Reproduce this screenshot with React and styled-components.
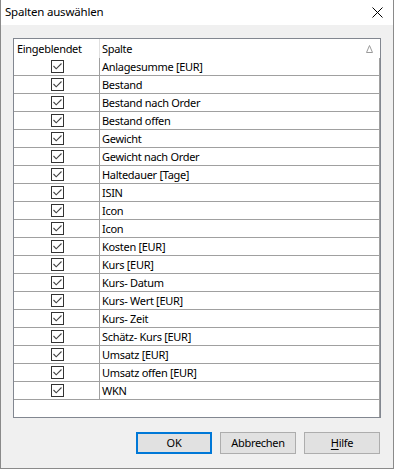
import React from 'react';
import styled, { createGlobalStyle } from 'styled-components';

const GlobalStyle = createGlobalStyle`
  html, body {
    margin: 0;
    padding: 0;
    background: #ffffff;
  }
  body {
    font-family: "Noto Sans", "Open Sans", sans-serif;
    font-size: 11px;
    letter-spacing: -0.3px;
    color: #000;
  }
`

const Window = styled.div`
  width: 394px;
  height: 469px;
  box-sizing: border-box;
  border: 1px solid #8a8a8a;
  border-top: none;
  background: #f0f0f0;
  display: flex;
  flex-direction: column;
`

const TitleBar = styled.div`
  height: 25px;
  background: #ffffff;
  display: flex;
  align-items: center;
  justify-content: space-between;
  padding: 0 10px 1px 4px;
  box-sizing: border-box;
`

const Title = styled.div`
  font-size: 11.5px;
  line-height: 16px;
  letter-spacing: -0.2px;
`

const Body = styled.div`
  flex: 1;
  display: flex;
  flex-direction: column;
  padding: 13px 12px 14px 12px;
`

const Table = styled.div`
  height: 380px;
  box-sizing: border-box;
  border: 1px solid #828790;
  background: #ffffff;
  display: flex;
  flex-direction: column;
`

const Header = styled.div`
  display: grid;
  grid-template-columns: 85px 1fr;
  height: 19px;
  flex: none;
`

const HeaderCell = styled.div`
  display: flex;
  align-items: center;
  justify-content: space-between;
  padding: 0 7px 0 ${p => (p.divider ? '2px' : '3px')};
  line-height: 16px;
  border-left: ${p => (p.divider ? '1px solid #e0e0e0' : 'none')};
`

const Rows = styled.div`
  flex: 1;
  border-right: 1px solid #a0a0a0;
`

const Row = styled.div`
  display: grid;
  grid-template-columns: 85px 1fr;
  height: 18px;
  box-sizing: border-box;
  border-bottom: 1px solid #a0a0a0;
`

const CheckCell = styled.div`
  display: flex;
  align-items: center;
  justify-content: center;
  padding-left: 1px;
`

const NameCell = styled.div`
  border-left: 1px solid #a0a0a0;
  padding: 0 0 0 2px;
  display: flex;
  align-items: center;
  line-height: 16px;
  white-space: nowrap;
`

const Buttons = styled.div`
  margin-top: 14px;
  display: flex;
  justify-content: flex-end;
  gap: 8px;
  padding-right: 1px;
`

const Button = styled.div`
  width: 76px;
  height: 22px;
  box-sizing: border-box;
  background: #e1e1e1;
  border: ${p => (p.primary ? '2px solid #0078d7' : '1px solid #adadad')};
  display: flex;
  align-items: center;
  justify-content: center;
  line-height: 16px;
  u {
    text-decoration: underline;
    text-underline-offset: 2px;
  }
`

const Checkbox = () => (
  <svg width="13" height="13" viewBox="0 0 13 13">
    <rect x="0.5" y="0.5" width="12" height="12" fill="#fff" stroke="#333" />
    <polyline points="2.5,6 5.2,8.8 10.5,3.5" fill="none" stroke="#444" strokeWidth="1.1" />
  </svg>
)

const columns = [
  'Anlagesumme [EUR]',
  'Bestand',
  'Bestand nach Order',
  'Bestand offen',
  'Gewicht',
  'Gewicht nach Order',
  'Haltedauer [Tage]',
  'ISIN',
  'Icon',
  'Icon',
  'Kosten [EUR]',
  'Kurs [EUR]',
  'Kurs- Datum',
  'Kurs- Wert [EUR]',
  'Kurs- Zeit',
  'Schätz- Kurs [EUR]',
  'Umsatz [EUR]',
  'Umsatz offen [EUR]',
  'WKN',
]

function App() {
  return (
    <React.Fragment>
      <GlobalStyle />
      <Window>
        <TitleBar>
          <Title>Spalten auswählen</Title>
          <svg width="11" height="11" viewBox="0 0 11 11">
            <path d="M0.5 0.5 L10.5 10.5 M10.5 0.5 L0.5 10.5" stroke="#000" strokeWidth="1" />
          </svg>
        </TitleBar>
        <Body>
          <Table>
            <Header>
              <HeaderCell>Eingeblendet</HeaderCell>
              <HeaderCell divider>
                <span>Spalte</span>
                <svg width="7" height="8" viewBox="0 0 7 8">
                  <path d="M3.5 0.5 L6.5 7.5 L0.5 7.5 Z" fill="none" stroke="#9a9a9a" strokeWidth="1" />
                </svg>
              </HeaderCell>
            </Header>
            <Rows>
              {columns.map((name, i) => (
                <Row key={i}>
                  <CheckCell><Checkbox /></CheckCell>
                  <NameCell>{name}</NameCell>
                </Row>
              ))}
            </Rows>
          </Table>
          <Buttons>
            <Button primary>OK</Button>
            <Button>Abbrechen</Button>
            <Button><span><u>H</u>ilfe</span></Button>
          </Buttons>
        </Body>
      </Window>
    </React.Fragment>
  )
}

export default App;
